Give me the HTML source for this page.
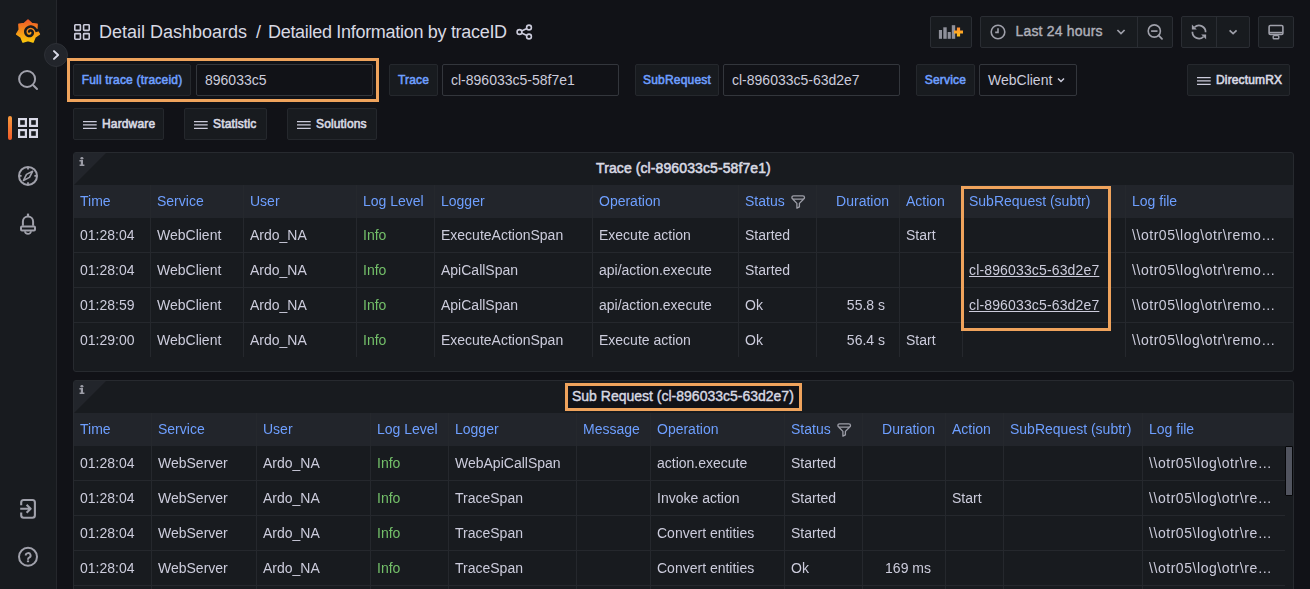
<!DOCTYPE html><html><head><meta charset="utf-8"><style>
*{box-sizing:border-box;margin:0;padding:0}
html,body{width:1310px;height:589px;overflow:hidden;background:#111217;font-family:"Liberation Sans",sans-serif;color:#ccccdc;font-size:14px}
div,span,svg{position:absolute}
.t{white-space:nowrap}
.lnk{color:#6e9fff}
.g{color:#73bf69}
.u{text-decoration:underline;text-underline-offset:1px}
.b{font-weight:bold}
.ga{will-change:transform}
</style></head><body>
<div style="left:0px;top:0px;width:56px;height:589px;background:#181b1f;"></div>
<div style="left:56px;top:0px;width:1px;height:589px;background:#25272c;"></div>
<svg style="left:0;top:0" width="57" height="60" viewBox="0 0 57 60">
<defs><linearGradient id="gl" x1="0" y1="20" x2="0" y2="43" gradientUnits="userSpaceOnUse"><stop offset="0" stop-color="#f05a28"/><stop offset="1" stop-color="#fbca0a"/></linearGradient></defs>
<path fill="url(#gl)" stroke="url(#gl)" stroke-width="1.6" stroke-linejoin="round" d="M28.00 20.00 L31.86 23.58 L37.07 24.37 L36.68 29.62 L39.31 34.18 L34.96 37.15 L33.03 42.05 L28.00 40.50 L22.97 42.05 L21.04 37.15 L16.69 34.18 L19.32 29.62 L18.93 24.37 L24.14 23.58Z"/>
<path d="M39.5 29.8 L36.30 30.69 L35.93 29.85 L35.45 29.09 L34.87 28.41 L34.21 27.82 L33.49 27.35 L32.72 26.98 L31.91 26.74 L31.09 26.61 L30.28 26.60 L29.48 26.71 L28.72 26.92 L28.00 27.24 L27.35 27.65 L26.78 28.14 L26.29 28.69 L25.89 29.30 L25.59 29.96 L25.38 30.63 L25.28 31.32 L25.28 32.00 L25.37 32.66 L25.55 33.29 L25.82 33.87 L26.16 34.40 L26.56 34.87 L27.02 35.27 L27.52 35.59 L28.06 35.83 L28.60 35.98 L29.16 36.06 L29.70 36.05 L30.23 35.97 L30.72 35.81 L31.18 35.59 L31.59 35.31 L31.95 34.99 L32.25 34.62 L32.48 34.23 L32.65 33.82 L32.76 33.40 L32.80 32.98 L32.78 32.57 L32.70 32.18 L32.57 31.81 L32.39 31.49 L32.17 31.20 L31.92 30.95 L31.65 30.76 L31.36 30.61 L31.06 30.51 L30.77 30.46 L30.48 30.45 L30.20 30.49 L29.95 30.57 L29.72 30.68 L29.52 30.82 L29.36 30.98 L29.23 31.16 L29.13 31.35 L29.08 31.53" fill="none" stroke="#181b1f" stroke-width="2.5" stroke-linecap="round"/>
</svg>
<svg style="left:0;top:0" width="57" height="589" viewBox="0 0 57 589" fill="none" stroke="#a0a1ab" stroke-width="2">
<circle cx="27.1" cy="79" r="8"/><path d="M33.2 85.2 L37 89" stroke-linecap="round"/>
<g stroke="#d8d9e6" stroke-width="2.2"><rect x="19.1" y="119.1" width="6.8" height="6.8"/><rect x="30.1" y="119.1" width="6.8" height="6.8"/><rect x="19.1" y="130.1" width="6.8" height="6.8"/><rect x="30.1" y="130.1" width="6.8" height="6.8"/></g>
<circle cx="28" cy="175.9" r="9"/>
<path d="M28 167.5v2M28 182.3v2M19.6 175.9h2M34.4 175.9h2" stroke-width="1.8"/>
<path d="M32.6 171.3 L29.5 177.4 L23.4 180.5 L26.5 174.4 Z" stroke-width="1.6" stroke-linejoin="round"/>
<path d="M28 213.6v2.8" stroke-width="2.2"/>
<path d="M22.9 225.8V221.5a5.1 5.1 0 0 1 10.2 0V225.8" stroke-width="2"/>
<rect x="21" y="226.6" width="14" height="3.8" rx="1" stroke-width="2"/>
<path d="M25 231.3a3 2.5 0 0 0 6 0" stroke-width="1.8"/>
<path d="M21.2 505.2V502.5a2.5 2.5 0 0 1 2.5-2.5h8.7a2.5 2.5 0 0 1 2.5 2.5v12.8a2.5 2.5 0 0 1-2.5 2.5h-8.7a2.5 2.5 0 0 1-2.5-2.5V512.4" stroke-width="2.1"/>
<path d="M20.2 508.8H30.6M26.6 504.8L30.6 508.8L26.6 512.8" stroke-width="2.1" stroke-linejoin="round"/>
<circle cx="28" cy="556.8" r="9"/>
<path d="M25.7 555.5a2.45 2.45 0 1 1 3.5 2.2c-.8.4-1.2.8-1.2 1.5v.5" stroke-width="1.9"/>
<rect x="26.9" y="560.4" width="2.2" height="1.8" fill="#a0a1ab" stroke="none"/>
</svg>
<div style="left:8px;top:116px;width:4px;height:24px;border-radius:2px;background:linear-gradient(#f79a3e,#f05a28);"></div>
<div style="left:44px;top:43px;width:24px;height:24px;border-radius:12px;background:#22252b;border:1px solid #2d3036"></div>
<svg style="left:44px;top:43px" width="24" height="24" viewBox="44 43 24 24"><path d="M54 51.1 L58.1 55 L54 58.9" fill="none" stroke="#d8d9e6" stroke-width="2" stroke-linecap="round" stroke-linejoin="round"/></svg>
<svg style="left:74px;top:24px" width="16" height="16" viewBox="0 0 16 16" fill="none" stroke="#ccccdc" stroke-width="1.6"><rect x="0.8" y="0.8" width="5.6" height="5.6" rx="0.6"/><rect x="9.6" y="0.8" width="5.6" height="5.6" rx="0.6"/><rect x="0.8" y="9.6" width="5.6" height="5.6" rx="0.6"/><rect x="9.6" y="9.6" width="5.6" height="5.6" rx="0.6"/></svg>
<div class="t" style="left:99px;top:22px;font-size:18px;line-height:20px;color:#d8d9e3;font-weight:normal;">Detail Dashboards</div>
<div class="t" style="left:256px;top:22px;font-size:18px;line-height:20px;color:#d8d9e3;font-weight:normal;">/</div>
<div class="t" style="left:268px;top:22px;font-size:18px;line-height:20px;color:#d8d9e3;font-weight:normal;letter-spacing:-0.3px">Detailed Information by traceID</div>
<svg style="left:516px;top:24px" width="17" height="16" viewBox="0 0 17 16" fill="none" stroke="#ccccdc" stroke-width="1.6"><circle cx="13" cy="3.5" r="2.4"/><circle cx="3.5" cy="8" r="2.4"/><circle cx="13" cy="12.5" r="2.4"/><path d="M5.6 6.9 L10.9 4.6 M5.6 9.1 L10.9 11.4"/></svg>
<div style="left:930px;top:16px;width:42px;height:32px;background:#181b1f;border:1px solid #2a2d33;border-radius:2px;"></div>
<div style="left:980px;top:16px;width:193px;height:32px;background:#181b1f;border:1px solid #2a2d33;border-radius:2px;"></div>
<div style="left:1137px;top:16px;width:1px;height:32px;background:#2a2d33;"></div>
<div style="left:1181px;top:16px;width:69px;height:32px;background:#181b1f;border:1px solid #2a2d33;border-radius:2px;"></div>
<div style="left:1216px;top:16px;width:1px;height:32px;background:#2a2d33;"></div>
<div style="left:1258px;top:16px;width:36px;height:32px;background:#181b1f;border:1px solid #2a2d33;border-radius:2px;"></div>
<div class="t" style="left:1015.5px;top:23px;font-size:14px;line-height:16px;color:#aeafb9;font-weight:normal;letter-spacing:0.18px;-webkit-text-stroke:0.4px #aeafb9">Last 24 hours</div>
<svg style="left:920px;top:10px" width="380" height="40" viewBox="920 10 380 40" fill="none" stroke="#9fa0aa" stroke-width="1.6">
<defs><linearGradient id="pl" x1="0" y1="27.5" x2="0" y2="36.5" gradientUnits="userSpaceOnUse"><stop offset="0" stop-color="#ff8a30"/><stop offset="1" stop-color="#ffc21a"/></linearGradient></defs>
<g fill="#8f909a" stroke="none"><rect x="938.9" y="30" width="3.1" height="8.8"/><rect x="943.3" y="27.3" width="3.4" height="11.5"/><rect x="947.7" y="32" width="3.1" height="6.8"/><rect x="951.8" y="25.2" width="3.4" height="13.6"/></g>
<path d="M958.5 27.5v9M954 32h9" stroke="url(#pl)" stroke-width="3.2"/>
<circle cx="998" cy="32" r="6.8"/><path d="M998 28.3V32.4H995.2" stroke-width="1.6"/>
<path d="M1117.4 30L1121 33.6L1124.6 30" stroke-width="1.7"/>
<circle cx="1154.3" cy="31" r="6.1"/><path d="M1151.1 31.1H1157.5" stroke-width="1.7"/><path d="M1158.6 35.4L1162 38.8" stroke-width="1.8" stroke-linecap="round"/>
<path d="M1194.6 27.2A6.6 6.6 0 0 1 1205.6 32.3" stroke-width="1.7"/><path d="M1192.4 31.7A6.6 6.6 0 0 0 1203.4 36.8" stroke-width="1.7"/>
<path d="M1191.9 24.5V29.4H1196.8Z" fill="#9fa0aa" stroke="none"/><path d="M1206.1 39.3V34.4H1201.2Z" fill="#9fa0aa" stroke="none"/>
<path d="M1229.6 30.3L1233.1 33.6L1236.6 30.3" stroke-width="1.7"/>
<rect x="1269.1" y="25.5" width="13.8" height="9" rx="1.3"/><path d="M1269.1 32.6H1282.9"/><rect x="1273.2" y="35.6" width="5.6" height="3.2" rx="0.8" stroke-width="1.4"/>
</svg>
<div style="left:67px;top:58px;width:312px;height:44px;border:3px solid #efa35c;"></div>
<div style="left:73px;top:64px;width:118px;height:32px;background:#181b1f;border:1px solid #25282d;border-radius:2px;"></div>
<div class="t" style="left:73px;top:64px;width:118px;height:32px;line-height:32px;text-align:center;font-size:12px;font-weight:normal;color:#6e9fff;letter-spacing:0.2px;-webkit-text-stroke:0.55px #6e9fff">Full trace (traceid)</div>
<div style="left:196px;top:64px;width:177px;height:32px;background:#111217;border:1px solid #33363c;border-radius:2px;"></div>
<div class="t" style="left:205px;top:73px;font-size:14px;line-height:14px;color:#ccccdc;font-weight:normal;">896033c5</div>
<div style="left:389px;top:64px;width:49px;height:32px;background:#181b1f;border:1px solid #25282d;border-radius:2px;"></div>
<div class="t" style="left:389px;top:64px;width:49px;height:32px;line-height:32px;text-align:center;font-size:12px;font-weight:normal;color:#6e9fff;letter-spacing:0.2px;-webkit-text-stroke:0.55px #6e9fff">Trace</div>
<div style="left:442px;top:64px;width:177px;height:32px;background:#111217;border:1px solid #33363c;border-radius:2px;"></div>
<div class="t" style="left:451px;top:73px;font-size:14px;line-height:14px;color:#ccccdc;font-weight:normal;">cl-896033c5-58f7e1</div>
<div style="left:635px;top:64px;width:84px;height:32px;background:#181b1f;border:1px solid #25282d;border-radius:2px;"></div>
<div class="t" style="left:635px;top:64px;width:84px;height:32px;line-height:32px;text-align:center;font-size:12px;font-weight:normal;color:#6e9fff;letter-spacing:0.2px;-webkit-text-stroke:0.55px #6e9fff">SubRequest</div>
<div style="left:723px;top:64px;width:177px;height:32px;background:#111217;border:1px solid #33363c;border-radius:2px;"></div>
<div class="t" style="left:732px;top:73px;font-size:14px;line-height:14px;color:#ccccdc;font-weight:normal;">cl-896033c5-63d2e7</div>
<div style="left:916px;top:64px;width:59px;height:32px;background:#181b1f;border:1px solid #25282d;border-radius:2px;"></div>
<div class="t" style="left:916px;top:64px;width:59px;height:32px;line-height:32px;text-align:center;font-size:12px;font-weight:normal;color:#6e9fff;letter-spacing:0.2px;-webkit-text-stroke:0.55px #6e9fff">Service</div>
<div style="left:979px;top:64px;width:98px;height:32px;background:#111217;border:1px solid #33363c;border-radius:2px;"></div>
<div class="t" style="left:988px;top:73px;font-size:14px;line-height:14px;color:#ccccdc;font-weight:normal;">WebClient</div>
<svg style="left:1056px;top:75px" width="10" height="10" viewBox="0 0 10 10"><path d="M2 3.5 L5 6.5 L8 3.5" fill="none" stroke="#ccccdc" stroke-width="1.5"/></svg>
<div style="left:1187px;top:64px;width:103px;height:32px;background:#181b1f;border:1px solid #25282d;border-radius:2px;"></div>
<svg style="left:1197px;top:74px" width="14" height="12" viewBox="0 0 14 12"><path d="M0 3.6h13.7M0 6.9h13.7M0 10.3h13.7" stroke="#ccccdc" stroke-width="1.3"/></svg>
<div class="t" style="left:1216px;top:73px;font-size:12px;line-height:14px;color:#d8d9e3;font-weight:normal;letter-spacing:0.15px;-webkit-text-stroke:0.6px #d8d9e3">DirectumRX</div>
<div style="left:73px;top:108px;width:91px;height:32px;background:#181b1f;border:1px solid #25282d;border-radius:2px;"></div>
<svg style="left:83px;top:118px" width="14" height="12" viewBox="0 0 14 12"><path d="M0 3.6h13.7M0 6.9h13.7M0 10.3h13.7" stroke="#ccccdc" stroke-width="1.3"/></svg>
<div class="t" style="left:102px;top:117px;font-size:12px;line-height:14px;color:#d8d9e3;font-weight:normal;letter-spacing:0.15px;-webkit-text-stroke:0.6px #d8d9e3">Hardware</div>
<div style="left:184px;top:108px;width:83px;height:32px;background:#181b1f;border:1px solid #25282d;border-radius:2px;"></div>
<svg style="left:194px;top:118px" width="14" height="12" viewBox="0 0 14 12"><path d="M0 3.6h13.7M0 6.9h13.7M0 10.3h13.7" stroke="#ccccdc" stroke-width="1.3"/></svg>
<div class="t" style="left:213px;top:117px;font-size:12px;line-height:14px;color:#d8d9e3;font-weight:normal;letter-spacing:0.15px;-webkit-text-stroke:0.6px #d8d9e3">Statistic</div>
<div style="left:287px;top:108px;width:90px;height:32px;background:#181b1f;border:1px solid #25282d;border-radius:2px;"></div>
<svg style="left:297px;top:118px" width="14" height="12" viewBox="0 0 14 12"><path d="M0 3.6h13.7M0 6.9h13.7M0 10.3h13.7" stroke="#ccccdc" stroke-width="1.3"/></svg>
<div class="t" style="left:316px;top:117px;font-size:12px;line-height:14px;color:#d8d9e3;font-weight:normal;letter-spacing:0.15px;-webkit-text-stroke:0.6px #d8d9e3">Solutions</div>
<div style="left:73px;top:152px;width:1221px;height:220px;background:#181b1f;border:1px solid #272a2f;border-radius:3px;"></div>
<div style="left:74px;top:153px;width:0;height:0;border-top:32px solid #22252b;border-right:32px solid transparent"></div>
<svg style="left:74px;top:152px" width="20" height="20" viewBox="74 152 20 20" fill="#9b9ca6"><ellipse cx="81.9" cy="158.2" rx="1.5" ry="1.2"/><path d="M79.4 160.1H83V164.6H84.4V166H79.6V164.6H80.8V161.5H79.4Z"/></svg>
<div class="t" style="left:596px;top:160px;font-size:14px;line-height:16px;color:#d8d9e3;font-weight:normal;letter-spacing:0.1px;-webkit-text-stroke:0.55px #d8d9e3">Trace (cl-896033c5-58f7e1)</div>
<div style="left:74px;top:185px;width:1219px;height:33px;background:#22252b;"></div>
<div style="left:74px;top:252px;width:1219px;height:1px;background:#25282d;"></div>
<div style="left:74px;top:287px;width:1219px;height:1px;background:#25282d;"></div>
<div style="left:74px;top:322px;width:1219px;height:1px;background:#25282d;"></div>
<div style="left:150px;top:185px;width:1px;height:172px;background:#25282d;"></div>
<div style="left:243px;top:185px;width:1px;height:172px;background:#25282d;"></div>
<div style="left:356px;top:185px;width:1px;height:172px;background:#25282d;"></div>
<div style="left:434px;top:185px;width:1px;height:172px;background:#25282d;"></div>
<div style="left:592px;top:185px;width:1px;height:172px;background:#25282d;"></div>
<div style="left:738px;top:185px;width:1px;height:172px;background:#25282d;"></div>
<div style="left:816px;top:185px;width:1px;height:172px;background:#25282d;"></div>
<div style="left:899px;top:185px;width:1px;height:172px;background:#25282d;"></div>
<div style="left:962px;top:185px;width:1px;height:172px;background:#25282d;"></div>
<div style="left:1125px;top:185px;width:1px;height:172px;background:#25282d;"></div>
<div class="t" style="left:80px;top:185px;font-size:14px;line-height:33px;color:#6e9fff;font-weight:normal;will-change:transform">Time</div>
<div class="t" style="left:157px;top:185px;font-size:14px;line-height:33px;color:#6e9fff;font-weight:normal;will-change:transform">Service</div>
<div class="t" style="left:250px;top:185px;font-size:14px;line-height:33px;color:#6e9fff;font-weight:normal;will-change:transform">User</div>
<div class="t" style="left:363px;top:185px;font-size:14px;line-height:33px;color:#6e9fff;font-weight:normal;will-change:transform">Log Level</div>
<div class="t" style="left:441px;top:185px;font-size:14px;line-height:33px;color:#6e9fff;font-weight:normal;will-change:transform">Logger</div>
<div class="t" style="left:599px;top:185px;font-size:14px;line-height:33px;color:#6e9fff;font-weight:normal;will-change:transform">Operation</div>
<div class="t" style="left:745px;top:185px;font-size:14px;line-height:33px;color:#6e9fff;font-weight:normal;will-change:transform">Status</div>
<div class="t ga" style="left:816px;top:185px;width:73px;height:33px;line-height:33px;text-align:right;color:#6e9fff">Duration</div>
<div class="t" style="left:906px;top:185px;font-size:14px;line-height:33px;color:#6e9fff;font-weight:normal;will-change:transform">Action</div>
<div class="t" style="left:969px;top:185px;font-size:14px;line-height:33px;color:#6e9fff;font-weight:normal;will-change:transform">SubRequest (subtr)</div>
<div class="t" style="left:1132px;top:185px;font-size:14px;line-height:33px;color:#6e9fff;font-weight:normal;will-change:transform">Log file</div>
<div class="t ga " style="left:80px;top:218px;height:35px;line-height:35px;color:#ccccdc;">01:28:04</div>
<div class="t ga " style="left:157px;top:218px;height:35px;line-height:35px;color:#ccccdc;">WebClient</div>
<div class="t ga " style="left:250px;top:218px;height:35px;line-height:35px;color:#ccccdc;">Ardo_NA</div>
<div class="t ga " style="left:363px;top:218px;height:35px;line-height:35px;color:#73bf69;">Info</div>
<div class="t ga " style="left:441px;top:218px;height:35px;line-height:35px;color:#ccccdc;">ExecuteActionSpan</div>
<div class="t ga " style="left:599px;top:218px;height:35px;line-height:35px;color:#ccccdc;">Execute action</div>
<div class="t ga " style="left:745px;top:218px;height:35px;line-height:35px;color:#ccccdc;">Started</div>
<div class="t ga " style="left:906px;top:218px;height:35px;line-height:35px;color:#ccccdc;">Start</div>
<div class="t ga " style="left:1132px;top:218px;height:35px;line-height:35px;color:#ccccdc;letter-spacing:0.55px;">\\otr05\log\otr\remo…</div>
<div class="t ga " style="left:80px;top:253px;height:35px;line-height:35px;color:#ccccdc;">01:28:04</div>
<div class="t ga " style="left:157px;top:253px;height:35px;line-height:35px;color:#ccccdc;">WebClient</div>
<div class="t ga " style="left:250px;top:253px;height:35px;line-height:35px;color:#ccccdc;">Ardo_NA</div>
<div class="t ga " style="left:363px;top:253px;height:35px;line-height:35px;color:#73bf69;">Info</div>
<div class="t ga " style="left:441px;top:253px;height:35px;line-height:35px;color:#ccccdc;">ApiCallSpan</div>
<div class="t ga " style="left:599px;top:253px;height:35px;line-height:35px;color:#ccccdc;">api/action.execute</div>
<div class="t ga " style="left:745px;top:253px;height:35px;line-height:35px;color:#ccccdc;">Started</div>
<div class="t ga u" style="left:969px;top:253px;height:35px;line-height:35px;color:#ccccdc;letter-spacing:0.15px;">cl-896033c5-63d2e7</div>
<div class="t ga " style="left:1132px;top:253px;height:35px;line-height:35px;color:#ccccdc;letter-spacing:0.55px;">\\otr05\log\otr\remo…</div>
<div class="t ga " style="left:80px;top:288px;height:35px;line-height:35px;color:#ccccdc;">01:28:59</div>
<div class="t ga " style="left:157px;top:288px;height:35px;line-height:35px;color:#ccccdc;">WebClient</div>
<div class="t ga " style="left:250px;top:288px;height:35px;line-height:35px;color:#ccccdc;">Ardo_NA</div>
<div class="t ga " style="left:363px;top:288px;height:35px;line-height:35px;color:#73bf69;">Info</div>
<div class="t ga " style="left:441px;top:288px;height:35px;line-height:35px;color:#ccccdc;">ApiCallSpan</div>
<div class="t ga " style="left:599px;top:288px;height:35px;line-height:35px;color:#ccccdc;">api/action.execute</div>
<div class="t ga " style="left:745px;top:288px;height:35px;line-height:35px;color:#ccccdc;">Ok</div>
<div class="t ga" style="left:816px;top:288px;width:69px;height:35px;line-height:35px;text-align:right;color:#ccccdc">55.8 s</div>
<div class="t ga u" style="left:969px;top:288px;height:35px;line-height:35px;color:#ccccdc;letter-spacing:0.15px;">cl-896033c5-63d2e7</div>
<div class="t ga " style="left:1132px;top:288px;height:35px;line-height:35px;color:#ccccdc;letter-spacing:0.55px;">\\otr05\log\otr\remo…</div>
<div class="t ga " style="left:80px;top:323px;height:35px;line-height:35px;color:#ccccdc;">01:29:00</div>
<div class="t ga " style="left:157px;top:323px;height:35px;line-height:35px;color:#ccccdc;">WebClient</div>
<div class="t ga " style="left:250px;top:323px;height:35px;line-height:35px;color:#ccccdc;">Ardo_NA</div>
<div class="t ga " style="left:363px;top:323px;height:35px;line-height:35px;color:#73bf69;">Info</div>
<div class="t ga " style="left:441px;top:323px;height:35px;line-height:35px;color:#ccccdc;">ExecuteActionSpan</div>
<div class="t ga " style="left:599px;top:323px;height:35px;line-height:35px;color:#ccccdc;">Execute action</div>
<div class="t ga " style="left:745px;top:323px;height:35px;line-height:35px;color:#ccccdc;">Ok</div>
<div class="t ga" style="left:816px;top:323px;width:69px;height:35px;line-height:35px;text-align:right;color:#ccccdc">56.4 s</div>
<div class="t ga " style="left:906px;top:323px;height:35px;line-height:35px;color:#ccccdc;">Start</div>
<div class="t ga " style="left:1132px;top:323px;height:35px;line-height:35px;color:#ccccdc;letter-spacing:0.55px;">\\otr05\log\otr\remo…</div>
<div style="left:73px;top:380px;width:1221px;height:220px;background:#181b1f;border:1px solid #272a2f;border-radius:3px;"></div>
<div style="left:74px;top:381px;width:0;height:0;border-top:32px solid #22252b;border-right:32px solid transparent"></div>
<svg style="left:74px;top:380px" width="20" height="20" viewBox="74 152 20 20" fill="#9b9ca6"><ellipse cx="81.9" cy="158.2" rx="1.5" ry="1.2"/><path d="M79.4 160.1H83V164.6H84.4V166H79.6V164.6H80.8V161.5H79.4Z"/></svg>
<div class="t" style="left:572px;top:388px;font-size:14px;line-height:16px;color:#d8d9e3;font-weight:normal;letter-spacing:0.1px;-webkit-text-stroke:0.55px #d8d9e3">Sub Request (cl-896033c5-63d2e7)</div>
<div style="left:74px;top:413px;width:1219px;height:33px;background:#22252b;"></div>
<div style="left:74px;top:480px;width:1211px;height:1px;background:#25282d;"></div>
<div style="left:74px;top:515px;width:1211px;height:1px;background:#25282d;"></div>
<div style="left:74px;top:550px;width:1211px;height:1px;background:#25282d;"></div>
<div style="left:74px;top:585px;width:1211px;height:1px;background:#25282d;"></div>
<div style="left:151px;top:413px;width:1px;height:176px;background:#25282d;"></div>
<div style="left:256px;top:413px;width:1px;height:176px;background:#25282d;"></div>
<div style="left:370px;top:413px;width:1px;height:176px;background:#25282d;"></div>
<div style="left:448px;top:413px;width:1px;height:176px;background:#25282d;"></div>
<div style="left:576px;top:413px;width:1px;height:176px;background:#25282d;"></div>
<div style="left:650px;top:413px;width:1px;height:176px;background:#25282d;"></div>
<div style="left:784px;top:413px;width:1px;height:176px;background:#25282d;"></div>
<div style="left:862px;top:413px;width:1px;height:176px;background:#25282d;"></div>
<div style="left:945px;top:413px;width:1px;height:176px;background:#25282d;"></div>
<div style="left:1003px;top:413px;width:1px;height:176px;background:#25282d;"></div>
<div style="left:1142px;top:413px;width:1px;height:176px;background:#25282d;"></div>
<div class="t" style="left:80px;top:413px;font-size:14px;line-height:33px;color:#6e9fff;font-weight:normal;will-change:transform">Time</div>
<div class="t" style="left:158px;top:413px;font-size:14px;line-height:33px;color:#6e9fff;font-weight:normal;will-change:transform">Service</div>
<div class="t" style="left:263px;top:413px;font-size:14px;line-height:33px;color:#6e9fff;font-weight:normal;will-change:transform">User</div>
<div class="t" style="left:377px;top:413px;font-size:14px;line-height:33px;color:#6e9fff;font-weight:normal;will-change:transform">Log Level</div>
<div class="t" style="left:455px;top:413px;font-size:14px;line-height:33px;color:#6e9fff;font-weight:normal;will-change:transform">Logger</div>
<div class="t" style="left:583px;top:413px;font-size:14px;line-height:33px;color:#6e9fff;font-weight:normal;will-change:transform">Message</div>
<div class="t" style="left:657px;top:413px;font-size:14px;line-height:33px;color:#6e9fff;font-weight:normal;will-change:transform">Operation</div>
<div class="t" style="left:791px;top:413px;font-size:14px;line-height:33px;color:#6e9fff;font-weight:normal;will-change:transform">Status</div>
<div class="t ga" style="left:862px;top:413px;width:73px;height:33px;line-height:33px;text-align:right;color:#6e9fff">Duration</div>
<div class="t" style="left:952px;top:413px;font-size:14px;line-height:33px;color:#6e9fff;font-weight:normal;will-change:transform">Action</div>
<div class="t" style="left:1010px;top:413px;font-size:14px;line-height:33px;color:#6e9fff;font-weight:normal;will-change:transform">SubRequest (subtr)</div>
<div class="t" style="left:1149px;top:413px;font-size:14px;line-height:33px;color:#6e9fff;font-weight:normal;will-change:transform">Log file</div>
<div class="t ga " style="left:80px;top:446px;height:35px;line-height:35px;color:#ccccdc;">01:28:04</div>
<div class="t ga " style="left:158px;top:446px;height:35px;line-height:35px;color:#ccccdc;">WebServer</div>
<div class="t ga " style="left:263px;top:446px;height:35px;line-height:35px;color:#ccccdc;">Ardo_NA</div>
<div class="t ga " style="left:377px;top:446px;height:35px;line-height:35px;color:#73bf69;">Info</div>
<div class="t ga " style="left:455px;top:446px;height:35px;line-height:35px;color:#ccccdc;">WebApiCallSpan</div>
<div class="t ga " style="left:657px;top:446px;height:35px;line-height:35px;color:#ccccdc;">action.execute</div>
<div class="t ga " style="left:791px;top:446px;height:35px;line-height:35px;color:#ccccdc;">Started</div>
<div class="t ga " style="left:1149px;top:446px;height:35px;line-height:35px;color:#ccccdc;letter-spacing:0.55px;">\\otr05\log\otr\re…</div>
<div class="t ga " style="left:80px;top:481px;height:35px;line-height:35px;color:#ccccdc;">01:28:04</div>
<div class="t ga " style="left:158px;top:481px;height:35px;line-height:35px;color:#ccccdc;">WebServer</div>
<div class="t ga " style="left:263px;top:481px;height:35px;line-height:35px;color:#ccccdc;">Ardo_NA</div>
<div class="t ga " style="left:377px;top:481px;height:35px;line-height:35px;color:#73bf69;">Info</div>
<div class="t ga " style="left:455px;top:481px;height:35px;line-height:35px;color:#ccccdc;">TraceSpan</div>
<div class="t ga " style="left:657px;top:481px;height:35px;line-height:35px;color:#ccccdc;">Invoke action</div>
<div class="t ga " style="left:791px;top:481px;height:35px;line-height:35px;color:#ccccdc;">Started</div>
<div class="t ga " style="left:952px;top:481px;height:35px;line-height:35px;color:#ccccdc;">Start</div>
<div class="t ga " style="left:1149px;top:481px;height:35px;line-height:35px;color:#ccccdc;letter-spacing:0.55px;">\\otr05\log\otr\re…</div>
<div class="t ga " style="left:80px;top:516px;height:35px;line-height:35px;color:#ccccdc;">01:28:04</div>
<div class="t ga " style="left:158px;top:516px;height:35px;line-height:35px;color:#ccccdc;">WebServer</div>
<div class="t ga " style="left:263px;top:516px;height:35px;line-height:35px;color:#ccccdc;">Ardo_NA</div>
<div class="t ga " style="left:377px;top:516px;height:35px;line-height:35px;color:#73bf69;">Info</div>
<div class="t ga " style="left:455px;top:516px;height:35px;line-height:35px;color:#ccccdc;">TraceSpan</div>
<div class="t ga " style="left:657px;top:516px;height:35px;line-height:35px;color:#ccccdc;">Convert entities</div>
<div class="t ga " style="left:791px;top:516px;height:35px;line-height:35px;color:#ccccdc;">Started</div>
<div class="t ga " style="left:1149px;top:516px;height:35px;line-height:35px;color:#ccccdc;letter-spacing:0.55px;">\\otr05\log\otr\re…</div>
<div class="t ga " style="left:80px;top:551px;height:35px;line-height:35px;color:#ccccdc;">01:28:04</div>
<div class="t ga " style="left:158px;top:551px;height:35px;line-height:35px;color:#ccccdc;">WebServer</div>
<div class="t ga " style="left:263px;top:551px;height:35px;line-height:35px;color:#ccccdc;">Ardo_NA</div>
<div class="t ga " style="left:377px;top:551px;height:35px;line-height:35px;color:#73bf69;">Info</div>
<div class="t ga " style="left:455px;top:551px;height:35px;line-height:35px;color:#ccccdc;">TraceSpan</div>
<div class="t ga " style="left:657px;top:551px;height:35px;line-height:35px;color:#ccccdc;">Convert entities</div>
<div class="t ga " style="left:791px;top:551px;height:35px;line-height:35px;color:#ccccdc;">Ok</div>
<div class="t ga" style="left:862px;top:551px;width:69px;height:35px;line-height:35px;text-align:right;color:#ccccdc">169 ms</div>
<div class="t ga " style="left:1149px;top:551px;height:35px;line-height:35px;color:#ccccdc;letter-spacing:0.55px;">\\otr05\log\otr\re…</div>
<svg style="left:791px;top:194px" width="15" height="16" viewBox="0 0 15 16" fill="none" stroke="#9d9ea8" stroke-width="1.3" stroke-linejoin="round"><rect x="0.9" y="1.8" width="12.6" height="3.4" rx="1.7"/><path d="M1.9 5.2L5.9 9.4V14.2L8.4 12.9V9.4L12.5 5.2"/></svg>
<svg style="left:837px;top:422px" width="15" height="16" viewBox="0 0 15 16" fill="none" stroke="#9d9ea8" stroke-width="1.3" stroke-linejoin="round"><rect x="0.9" y="1.8" width="12.6" height="3.4" rx="1.7"/><path d="M1.9 5.2L5.9 9.4V14.2L8.4 12.9V9.4L12.5 5.2"/></svg>
<div style="left:961px;top:186px;width:150px;height:145px;border:3px solid #efa35c;"></div>
<div style="left:565px;top:383px;width:237px;height:28px;background:#111217;border:3px solid #efa35c;"></div>
<div class="t" style="left:572px;top:388px;font-size:14px;line-height:16px;color:#d8d9e3;font-weight:normal;-webkit-text-stroke:0.4px #d8d9e3">Sub Request (cl-896033c5-63d2e7)</div>
<div style="left:1285px;top:446px;width:8px;height:50px;background:#51545f;border:1px solid #060709;border-radius:1px;"></div>
</body></html>
